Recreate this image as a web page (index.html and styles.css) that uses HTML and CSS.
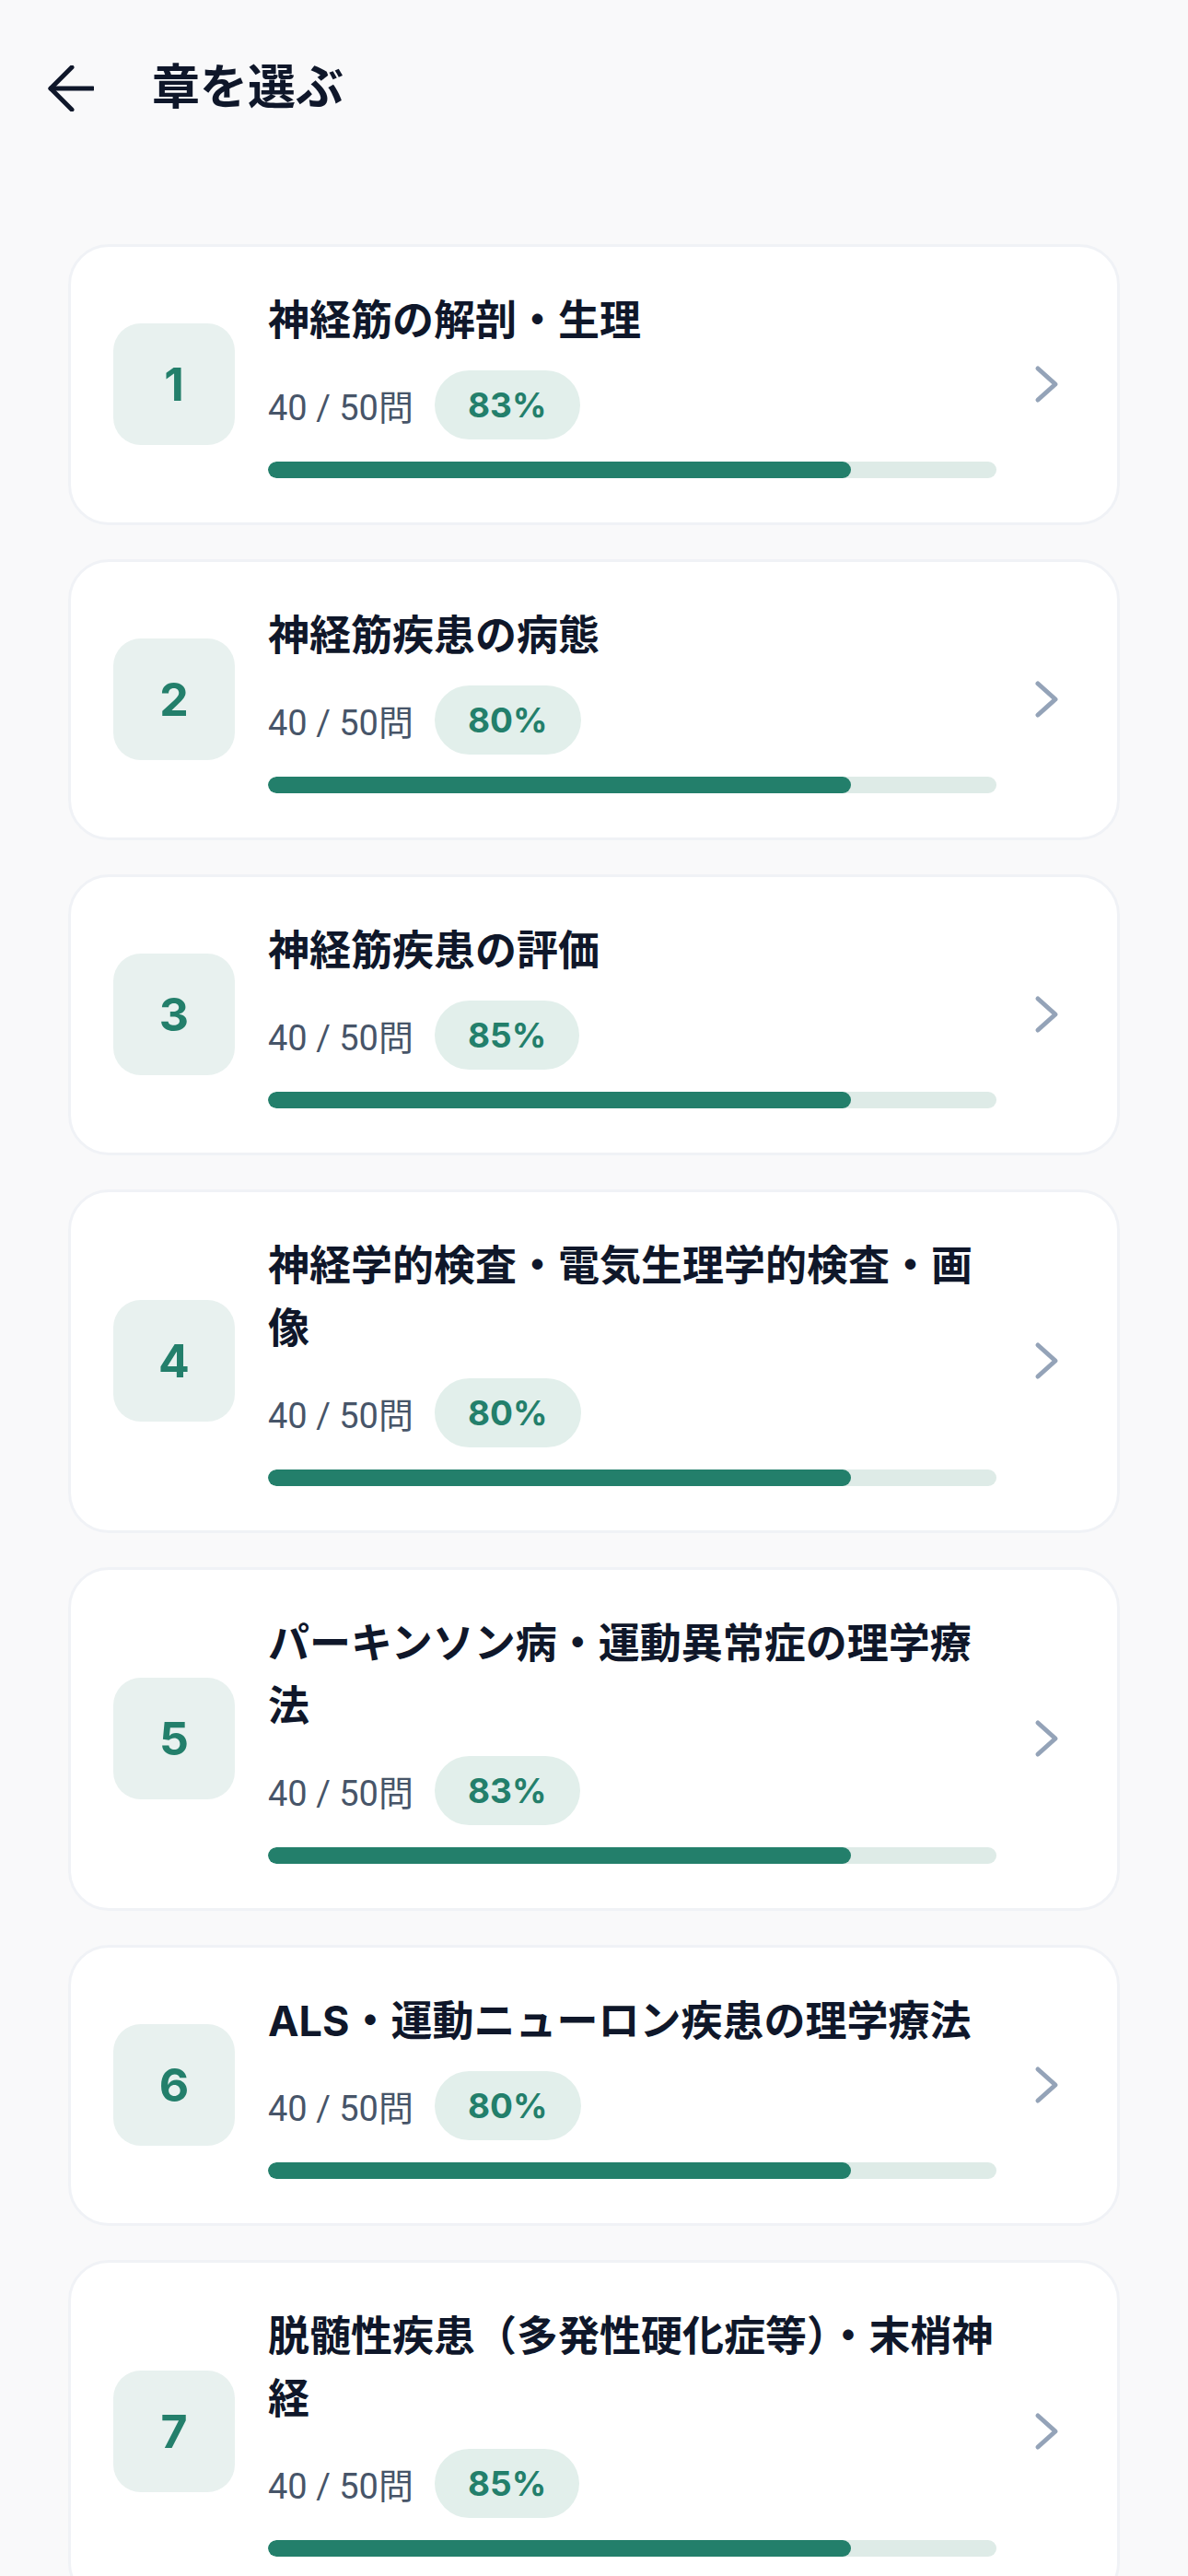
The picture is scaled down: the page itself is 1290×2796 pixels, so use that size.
FILE: index.html
```html
<!DOCTYPE html>
<html lang="ja">
<head>
  <meta charset="UTF-8">
  <meta name="viewport" content="width=device-width, initial-scale=1.0">
  <title>章を選ぶ</title>
  <link rel="stylesheet" href="styles.css">
</head>
<body>
  <header class="top-bar">
    <button class="back-button" aria-label="戻る">
      <svg width="50" height="50" viewBox="0 0 50 50" fill="none" stroke="#0f172a" stroke-width="5" stroke-linecap="round" stroke-linejoin="round">
        <path d="M49 25H3"/>
        <path d="M26 2L3 25L26 48"/>
      </svg>
    </button>
    <h1>章を選ぶ</h1>
  </header>

  <!-- Chapter list -->
  <main class="chapter-list" id="chapter-list"></main>

  <script>
    const chapters = [
      { no: 1, title: "神経筋の解剖・生理", done: 40, total: 50, rate: 83 },
      { no: 2, title: "神経筋疾患の病態", done: 40, total: 50, rate: 80 },
      { no: 3, title: "神経筋疾患の評価", done: 40, total: 50, rate: 85 },
      { no: 4, title: "神経学的検査・電気生理学的検査・画像", done: 40, total: 50, rate: 80 },
      { no: 5, title: "パーキンソン病・運動異常症の理学療法", done: 40, total: 50, rate: 83 },
      { no: 6, title: "ALS・運動ニューロン疾患の理学療法", done: 40, total: 50, rate: 80 },
      { no: 7, title: "脱髄性疾患（多発性硬化症等）・末梢神経", done: 40, total: 50, rate: 85 }
    ];

    function renderChapters() {
      const list = document.getElementById('chapter-list');
      list.innerHTML = '';
      chapters.forEach(ch => {
        const card = document.createElement('a');
        card.classList.add('chapter-card');
        card.href = '#';
        const progress = Math.round(ch.done / ch.total * 100);
        card.innerHTML = `
          <div class="chapter-no">${ch.no}</div>
          <div class="chapter-body">
            <h2>${ch.title}</h2>
            <div class="chapter-meta">
              <span class="count">${ch.done} / ${ch.total}問</span>
              <span class="rate">${ch.rate}%</span>
            </div>
            <div class="bar"><div class="bar-fill" style="width: ${progress}%"></div></div>
          </div>
          <svg class="chevron" width="30" height="44" viewBox="0 0 30 44" fill="none" stroke="#94a3b8" stroke-width="5" stroke-linecap="round" stroke-linejoin="round">
            <path d="M5 5L24 22L5 39"/>
          </svg>
        `;
        list.appendChild(card);
      });
    }

    window.onload = renderChapters;
  </script>
</body>
</html>
```
FILE: styles.css
```css
* {
  box-sizing: border-box;
}

body {
  font-family: Inter, "Noto Sans CJK JP", sans-serif;
  background-color: #f9f9fa;
  color: #0f172a;
  margin: 0;
  padding: 0;
}

.top-bar {
  height: 191px;
  display: flex;
  align-items: center;
  padding-left: 52px;
}

.back-button {
  width: 50px;
  height: 50px;
  padding: 0;
  border: none;
  background: none;
  display: flex;
  cursor: pointer;
}

.top-bar h1 {
  margin: 0 0 0 63px;
  font-size: 52px;
  font-weight: 700;
  line-height: 1.2;
}

.chapter-list {
  padding: 74px 74px 40px;
  display: flex;
  flex-direction: column;
  gap: 37px;
}

.chapter-card {
  display: flex;
  align-items: center;
  background-color: #fff;
  border: 3px solid #f0f2f6;
  border-radius: 44px;
  padding: 46px 61px 48px 46px;
  text-decoration: none;
  color: inherit;
}

.chapter-no {
  flex-shrink: 0;
  width: 132px;
  height: 132px;
  border-radius: 30px;
  background-color: #e8f1ef;
  color: #237f6b;
  font-size: 50px;
  font-weight: 700;
  display: flex;
  align-items: center;
  justify-content: center;
  margin-right: 36px;
}

.chapter-body {
  flex: 1;
  min-width: 0;
}

.chapter-body h2 {
  margin: 0;
  font-size: 45px;
  font-weight: 700;
  line-height: 68px;
  color: #0f172a;
}

.chapter-meta {
  display: flex;
  align-items: center;
  gap: 23px;
  margin-top: 20px;
}

.count {
  font-family: Roboto, "Noto Sans CJK JP", sans-serif;
  font-size: 38px;
  color: #475569;
}

.rate {
  font-size: 37px;
  font-weight: 700;
  line-height: 45px;
  color: #237f6b;
  background-color: #e2efeb;
  padding: 15px 36px;
  border-radius: 999px;
}

.bar {
  margin-top: 24px;
  height: 18px;
  border-radius: 9px;
  background-color: #deebe7;
  overflow: hidden;
}

.bar-fill {
  height: 100%;
  border-radius: 9px;
  background-color: #237f6b;
}

.chevron {
  flex-shrink: 0;
  margin-left: 40px;
}
```
